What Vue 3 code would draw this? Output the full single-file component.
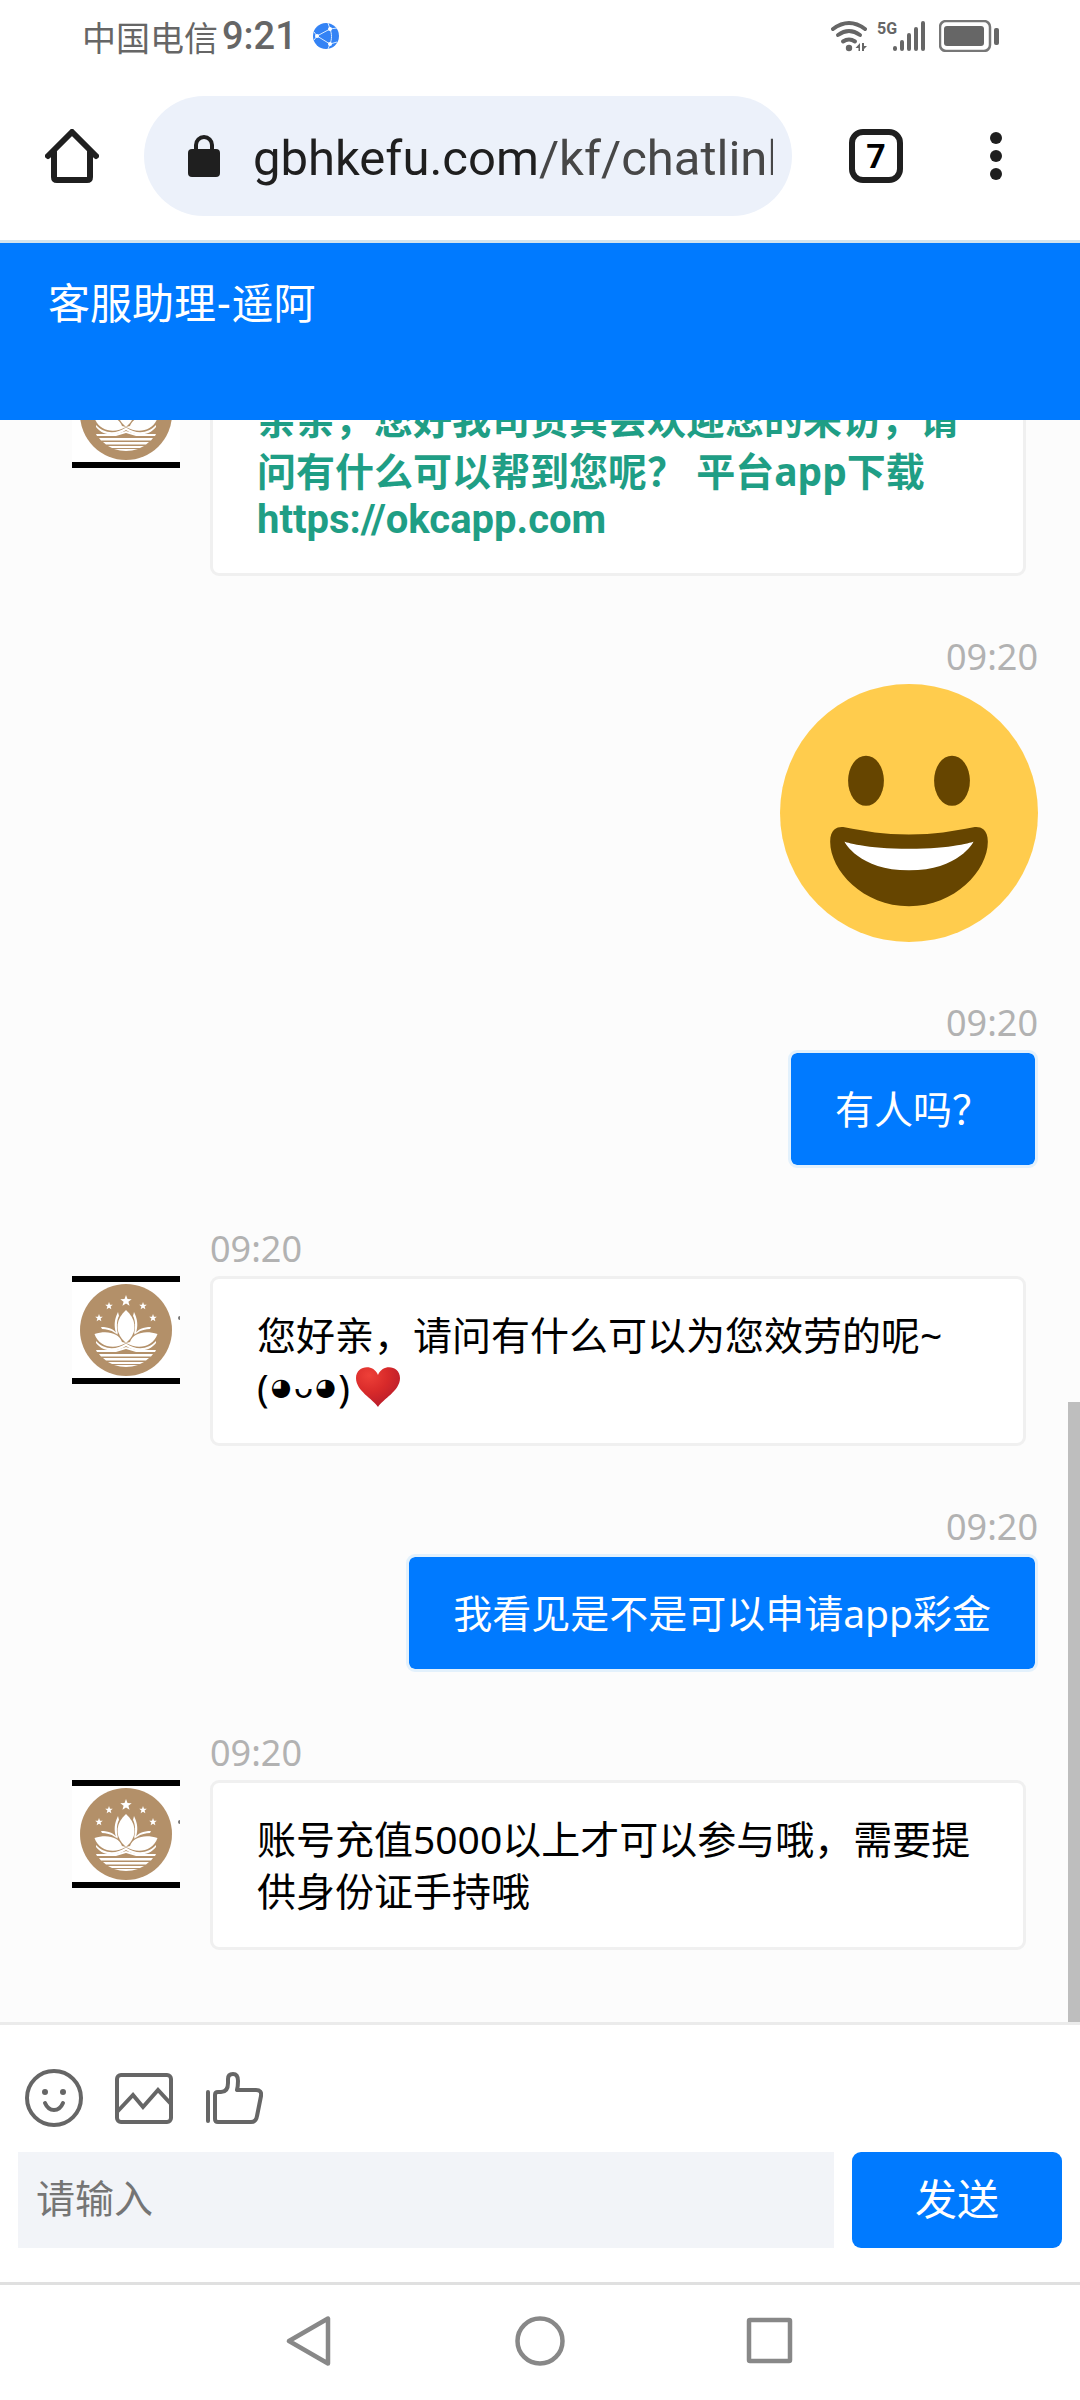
<script setup>
import { ref } from 'vue';

const draft = ref('');

const messages = ref([
  {
    id: 1,
    from: 'agent',
    time: '09:20',
    strong: true,
    text: '亲亲，您好我司贵宾会欢迎您的来访，请问有什么可以帮到您呢？ 平台app下载',
    link: 'https://okcapp.com'
  },
  { id: 2, from: 'me', time: '09:20', sticker: true },
  { id: 3, from: 'me', time: '09:20', text: '有人吗？' },
  { id: 4, from: 'agent', time: '09:20', text: '您好亲，请问有什么可以为您效劳的呢~', kaomoji: true },
  { id: 5, from: 'me', time: '09:20', text: '我看见是不是可以申请app彩金' },
  { id: 6, from: 'agent', time: '09:20', text: '账号充值5000以上才可以参与哦，需要提供身份证手持哦' }
]);

// [x, y, scale] of each star on the emblem
const stars = [
  [54, 25, 6],
  [37, 30, 4],
  [71, 30, 4],
  [27, 42, 4],
  [81, 42, 4]
];

function send() {
  const text = draft.value.trim();
  if (!text) return;
  const now = new Date();
  const time = [now.getHours(), now.getMinutes()].map((n) => String(n).padStart(2, '0')).join(':');
  messages.value.push({ id: messages.value.length + 1, from: 'me', time, text });
  draft.value = '';
}
</script>

<template>
  <div class="screen">
    <div class="status-bar">
      <div class="status-left">
        <span class="carrier">中国电信</span>
        <span class="clock">9:21</span>
        <svg class="globe" width="26" height="26" viewBox="0 0 26 26">
          <circle cx="13" cy="13" r="13" fill="#3483f5" />
          <g fill="none" stroke="#d8ebff" stroke-width="1">
            <path d="M4 13L17 6L24 5M4 13L17 21M17 6C19 11 19 16 17 21M17 6L15 0M17 21L15 26M17 21L24 19M4 13L1 9M4 13L1 17" />
          </g>
          <g fill="#fff">
            <circle cx="4" cy="13" r="2" />
            <circle cx="17" cy="6" r="2" />
            <circle cx="17" cy="21" r="2" />
          </g>
        </svg>
      </div>
      <div class="status-right">
        <svg width="36" height="32" viewBox="0 0 36 32">
          <g fill="none" stroke="#666" stroke-width="4" stroke-linecap="round">
            <path d="M2 9Q18 -3 34 9" />
            <path d="M7 15Q18 7 29 15" />
            <path d="M12 21.500Q18 17.500 24 21.500" />
          </g>
          <circle cx="18" cy="28" r="3.200" fill="#666" />
          <path d="M29 23V31H27.500V28H24.500ZM31 23V31H33V29L36 26H33V23Z" fill="#666" />
        </svg>
        <svg width="52" height="32" viewBox="0 0 52 32">
          <text class="net-type" x="0" y="14">5G</text>
          <g stroke="#666" stroke-width="4" stroke-linecap="round">
            <path d="M18 28V29M25 22V29M32 15V29M39 9V29M46 3V29" />
          </g>
        </svg>
        <svg width="60" height="32" viewBox="0 0 60 32">
          <rect x="1" y="1" width="50" height="30" rx="6" fill="none" stroke="#777" stroke-width="2.500" />
          <rect x="5" y="6" width="40" height="20" rx="3" fill="#666" />
          <rect x="55" y="8" width="5" height="17" rx="2" fill="#666" />
        </svg>
      </div>
    </div>

    <div class="toolbar">
      <button class="tool home" aria-label="主页">
        <svg width="54" height="54" viewBox="0 0 54 54" fill="none" stroke="#1f1f1f" stroke-width="6" stroke-linejoin="round" stroke-linecap="round">
          <path d="M3 27L27 3L51 27" />
          <path d="M9 23V48Q9 51 12 51H42Q45 51 45 48V23" />
        </svg>
      </button>
      <button class="address">
        <svg class="lock" width="32" height="42" viewBox="0 0 32 42">
          <path d="M8 16V10A8 8 0 0 1 24 10V16" fill="none" stroke="#1f1f1f" stroke-width="4" />
          <rect x="0" y="14" width="32" height="28" rx="4" fill="#1f1f1f" />
        </svg>
        <span class="url">gbhkefu.com<span class="path">/kf/chatlink</span></span>
      </button>
      <button class="tool tabs" aria-label="标签页"><span class="tab-count">7</span></button>
      <button class="tool menu" aria-label="菜单">
        <svg width="12" height="48" viewBox="0 0 12 48" fill="#1f1f1f">
          <circle cx="6" cy="6" r="6" />
          <circle cx="6" cy="24" r="6" />
          <circle cx="6" cy="42" r="6" />
        </svg>
      </button>
    </div>

    <header class="chat-header">
      <h1 class="chat-title">客服助理-遥阿</h1>
    </header>

    <main class="chat">
      <div v-for="msg in messages" :key="msg.id" class="message" :class="msg.from">
        <time class="time">{{ msg.time }}</time>
        <div class="row">
          <svg v-if="msg.from === 'agent'" class="avatar" viewBox="0 0 108 108">
            <rect width="108" height="108" fill="#fff" />
            <rect width="108" height="6" />
            <rect y="102" width="108" height="6" />
            <circle cx="54" cy="54" r="46" fill="#b39069" />
            <g fill="#fff">
              <path
                v-for="(s, i) in stars"
                :key="i"
                :transform="`translate(${s[0]} ${s[1]}) scale(${s[2]})`"
                d="M0 -1L.25 -.33L.95 -.31L.4 .13L.59 .81L0 .42L-.59 .81L-.4 .13L-.95 -.31L-.25 -.33Z"
              />
              <path d="M54 34C64 43 65 54 58 63L54 67L50 63C43 54 44 43 54 34Z" />
              <path d="M46 36C42 44 42 50 44 57L46 58C44 50 45 43 47 40ZM62 36C66 44 66 50 64 57L62 58C64 50 63 43 61 40Z" />
              <path d="M29 51C37 51 42 53 46 59L43 57C39 54 34 53 30 53ZM79 51C71 51 66 53 62 59L65 57C69 54 74 53 78 53Z" />
              <path d="M22.500 58C35 54 47 57 50 66L54 67C42 74 27 71 22.500 58Z" />
              <path d="M85.500 58C73 54 61 57 58 66L54 67C66 74 81 71 85.500 58Z" />
              <path d="M24 65C31 73 43 75 54 67.500C65 75 77 73 84 65L84 67C77 76 64 77 54 70C44 77 31 76 24 67Z" />
              <path d="M24 74H44L54 71L64 74H84L83 76H64L54 73L44 76H25Z" />
              <path d="M27 78H81L79 80.500H29ZM31 82H77L74 84.500H34ZM36 86H72L68 88H40ZM42 89H66Q54 93 42 89Z" />
            </g>
            <circle cx="108" cy="42" r="2" fill="#777" />
          </svg>

          <svg v-if="msg.sticker" class="sticker" viewBox="0 0 36 36">
            <circle cx="18" cy="18" r="18" fill="#ffcc4d" />
            <path d="M18 21c-3.623 0-6.027-.422-9-1-.679-.131-2 0-2 2 0 4 4.595 9 11 9 6.404 0 11-5 11-9 0-2-1.321-2.132-2-2-2.973.578-5.377 1-9 1z" fill="#664500" />
            <path d="M9 22s3 1 9 1 9-1 9-1-2 4-9 4-9-4-9-4z" fill="#fff" />
            <ellipse cx="12" cy="13.500" rx="2.500" ry="3.500" fill="#664500" />
            <ellipse cx="24" cy="13.500" rx="2.500" ry="3.500" fill="#664500" />
          </svg>

          <div v-else class="bubble" :class="{ strong: msg.strong }">
            <p>{{ msg.text }}</p>
            <a v-if="msg.link" :href="msg.link">{{ msg.link }}</a>
            <p v-if="msg.kaomoji" class="kaomoji">
              <span>(</span><span class="eye">◕</span><span class="mouth">ᴗ</span><span class="eye">◕</span><span>)</span>
              <svg width="44" height="40" viewBox="0 0 44 40">
                <defs>
                  <radialGradient id="heart" cx="30%" cy="20%" r="85%">
                    <stop offset="0" stop-color="#ee4038" />
                    <stop offset="0.500" stop-color="#d82a2a" />
                    <stop offset="1" stop-color="#b71c2b" />
                  </radialGradient>
                </defs>
                <path d="M22 40C17 32 0 24 0 11C0 -1 17 -4 22 8C27 -4 44 -1 44 11C44 24 27 32 22 40Z" fill="url(#heart)" />
              </svg>
            </p>
          </div>
        </div>
      </div>
      <div class="scroll-thumb"></div>
    </main>

    <footer class="composer">
      <div class="tools">
        <button aria-label="表情">
          <svg width="58" height="58" viewBox="0 0 58 58" fill="none" stroke="#666" stroke-width="4" stroke-linecap="round">
            <circle cx="29" cy="29" r="27" />
            <path d="M20 34Q23 41 29 41Q35 41 38 34" />
            <circle cx="20" cy="23" r="3" fill="#666" stroke="none" />
            <circle cx="38" cy="23" r="3" fill="#666" stroke="none" />
          </svg>
        </button>
        <button aria-label="图片">
          <svg width="58" height="58" viewBox="0 0 58 58" fill="none" stroke="#666" stroke-width="4">
            <rect x="2" y="6" width="54" height="47" rx="4" />
            <path d="M2 43L18 26L28 38L43 21L56 35" />
          </svg>
        </button>
        <button aria-label="点赞">
          <svg width="58" height="58" viewBox="0 0 58 58" fill="none" stroke="#666" stroke-width="4" stroke-linecap="round" stroke-linejoin="round">
            <path d="M3 23V52" />
            <path d="M10 26Q10 23 13 23H16Q23 23 23 14V10Q23 5 28 5Q33 5 33 12Q33 17 32 21H51Q57 21 56 27L52 47Q51 53 46 53H13Q10 53 10 50Z" />
          </svg>
        </button>
      </div>
      <form class="input-row" @submit.prevent="send">
        <input v-model="draft" type="text" placeholder="请输入" aria-label="请输入" />
        <button class="send" type="submit">发送</button>
      </form>
    </footer>

    <nav class="system-nav">
      <button aria-label="返回">
        <svg width="50" height="50" viewBox="0 0 50 50" fill="none" stroke="#888" stroke-width="4.500" stroke-linejoin="round">
          <path d="M43 2.500V47.500L4 25Z" />
        </svg>
      </button>
      <button aria-label="主屏幕">
        <svg width="50" height="50" viewBox="0 0 50 50" fill="none" stroke="#888" stroke-width="4.500">
          <circle cx="25" cy="25" r="22.500" />
        </svg>
      </button>
      <button aria-label="最近任务">
        <svg width="50" height="50" viewBox="0 0 50 50" fill="none" stroke="#888" stroke-width="4.500" stroke-linejoin="round">
          <rect x="4" y="4" width="41" height="41" rx="1" />
        </svg>
      </button>
    </nav>
  </div>
</template>

<style>
body {
  margin: 0;
  background: #fff;
}
</style>

<style scoped>
.screen {
  height: 100vh;
  display: flex;
  flex-direction: column;
  overflow: hidden;
  font-family: Roboto, "Noto Sans CJK SC", sans-serif;
  color: #000;
}

button {
  padding: 0;
  border: none;
  background: none;
  font-family: inherit;
  color: inherit;
  cursor: pointer;
}

svg {
  display: block;
  flex: none;
}

/* Status bar */
.status-bar {
  flex: none;
  display: flex;
  justify-content: space-between;
  align-items: center;
  height: 72px;
  padding: 0 81px 0 82px;
  color: #666;
}

.status-left,
.status-right {
  display: flex;
  align-items: center;
}

.status-right {
  gap: 10px;
}

.carrier {
  font-size: 34px;
}

.clock {
  margin-left: 4px;
  font-size: 38px;
  font-weight: 500;
}

.globe {
  margin-left: 16px;
}

.net-type {
  font: bold 16px Roboto, sans-serif;
  fill: #666;
}

/* Browser toolbar */
.toolbar {
  flex: none;
  display: flex;
  align-items: center;
  height: 168px;
  padding-right: 48px;
  border-bottom: 3px solid #d3e4ee;
}

.tool {
  display: flex;
  justify-content: center;
  align-items: center;
}

.home {
  width: 144px;
}

.tabs {
  width: 168px;
}

.menu {
  width: 72px;
}

.address {
  flex: 1;
  min-width: 0;
  height: 120px;
  padding: 0 19px 0 44px;
  display: flex;
  align-items: center;
  gap: 33px;
  border-radius: 60px;
  background: #ecf1fa;
}

.url {
  flex: 1;
  padding-top: 6px;
  overflow: hidden;
  white-space: nowrap;
  text-align: left;
  font-size: 49px;
  line-height: 60px;
  color: #1f1f1f;
}

.path {
  color: #474747;
}

.tab-count {
  width: 54px;
  height: 54px;
  box-sizing: border-box;
  border: 6px solid #1f1f1f;
  border-radius: 14px;
  font-size: 34px;
  font-weight: 700;
  line-height: 42px;
}

/* Chat header */
.chat-header {
  flex: none;
  height: 177px;
  padding: 30px 48px;
  box-sizing: border-box;
  background: #007aff;
}

.chat-title {
  margin: 0;
  font-family: Lato, "Noto Sans CJK SC", sans-serif;
  font-size: 42px;
  font-weight: 400;
  line-height: 60px;
  color: #fff;
}

/* Messages */
.chat {
  position: relative;
  flex: 1;
  min-height: 0;
  display: flex;
  flex-direction: column;
  justify-content: flex-end;
  gap: 60px;
  padding: 0 42px 72px 72px;
  overflow: hidden;
  background: #fcfcfc;
  font-family: "Noto Sans", "Noto Sans CJK SC", sans-serif;
}

.message {
  flex: none;
  display: flex;
  flex-direction: column;
  align-items: flex-start;
}

.message.me {
  align-items: flex-end;
}

.time {
  margin-bottom: 6px;
  font-size: 36px;
  line-height: 42px;
  color: #b2b2b2;
}

.agent .time {
  margin-left: 138px;
}

.row {
  display: flex;
  align-items: flex-start;
  gap: 30px;
}

.agent .row {
  align-self: stretch;
  padding-right: 12px;
}

.avatar {
  width: 108px;
  height: 108px;
}

.sticker {
  width: 258px;
  height: 258px;
}

.bubble {
  padding: 30px 44px;
  border: 3px solid #f0f0f0;
  border-radius: 9px;
  background: #fff;
  font-size: 39px;
  line-height: 52px;
}

.agent .bubble {
  flex: 1;
}

.me .bubble {
  border-color: #e3f1fc;
  background: #007aff;
  background-clip: padding-box;
  color: #fff;
}

.bubble p {
  margin: 0;
}

.bubble.strong {
  font-weight: 700;
  color: #1f9e85;
}

.bubble a {
  display: block;
  font-family: Roboto, sans-serif;
  font-size: 40px;
  line-height: 46px;
  color: inherit;
  text-decoration: none;
}

.bubble .kaomoji {
  display: flex;
  align-items: center;
  gap: 2px;
}

.eye,
.mouth {
  font-family: "DejaVu Sans", sans-serif;
  font-size: 24px;
}

.mouth {
  font-size: 32px;
}

.kaomoji svg {
  margin-left: 4px;
}

.scroll-thumb {
  position: absolute;
  right: 0;
  bottom: 0;
  width: 12px;
  height: 620px;
  background: #bebebe;
}

/* Composer */
.composer {
  flex: none;
  padding: 44px 18px 34px;
  border-top: 3px solid #ebebeb;
}

.tools {
  display: flex;
  gap: 32px;
  margin: 0 7px 25px;
}

.input-row {
  display: flex;
  gap: 18px;
}

.input-row input {
  flex: 1;
  min-width: 0;
  height: 96px;
  box-sizing: border-box;
  padding: 0 18px;
  border: none;
  outline: none;
  background: #f2f4f8;
  font-family: inherit;
  font-size: 39px;
}

.input-row input::placeholder {
  color: #757575;
}

.send {
  width: 210px;
  height: 96px;
  padding-bottom: 8px;
  border-radius: 9px;
  background: #007aff;
  font-size: 42px;
  color: #fff;
}

/* System navigation */
.system-nav {
  flex: none;
  display: flex;
  justify-content: center;
  align-items: center;
  gap: 180px;
  height: 112px;
  padding-bottom: 3px;
  border-top: 3px solid #e0e0e0;
}
</style>
